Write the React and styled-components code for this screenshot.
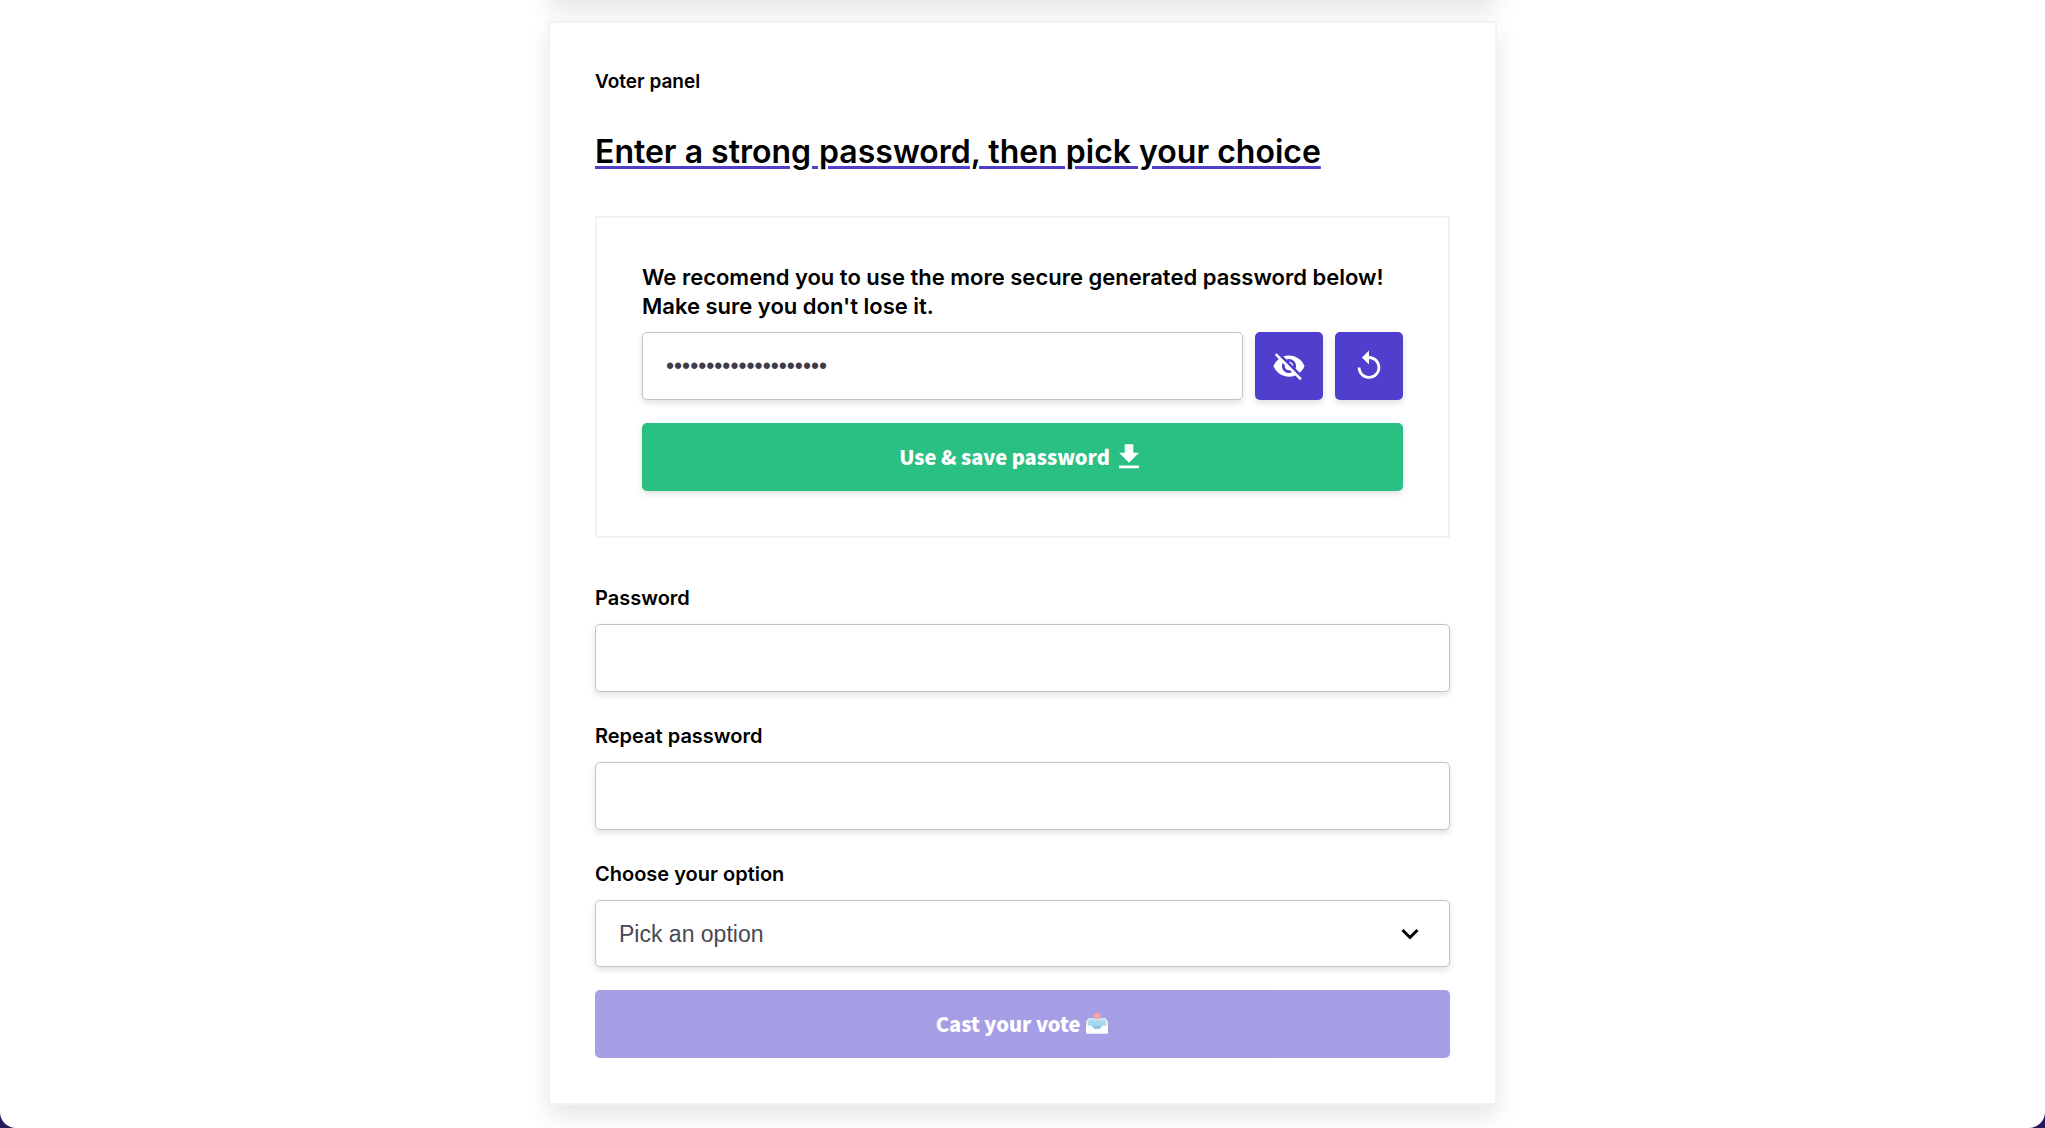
import React, { useState } from "react";
import styled, { createGlobalStyle } from "styled-components";
import { MdVisibility, MdVisibilityOff, MdReplay, MdFileDownload } from "react-icons/md";

const GlobalStyle = createGlobalStyle`
  *, *::before, *::after { box-sizing: border-box; }
  html { background: #281a5c; }
  body {
    margin: 0;
    color: #000;
    font-family: Inter, "Liberation Sans", sans-serif;
  }
`;

const Page = styled.main`
  display: flex;
  flex-direction: column;
  align-items: center;
  gap: 21px;
  min-height: 100vh;
  padding-bottom: 23px;
  overflow: hidden;
  background: #fff;
  border-radius: 0 0 16px 16px;
`;

const Card = styled.section`
  width: 100%;
  max-width: 949px;
  padding: 45px;
  border: 2px solid #f2f2f2;
  background: #fff;
  box-shadow: 0 11px 23px rgba(0, 0, 0, 0.1);
`;

const PreviousCard = styled(Card)`
  margin-top: -94px;
`;

const Eyebrow = styled.p`
  margin: 0 0 36px;
  font-size: 19px;
  font-weight: 600;
  line-height: 28px;
`;

const Title = styled.h2`
  margin: 0 0 44px;
  font-size: 32px;
  font-weight: 600;
  line-height: 40px;
  text-decoration: underline;
  text-decoration-color: #503fcd;
  text-decoration-thickness: 3px;
  text-underline-offset: 3px;
`;

const Suggestion = styled.div`
  display: flex;
  flex-direction: column;
  gap: 23px;
  margin-bottom: 48px;
  padding: 45px;
  border: 2px solid #f2f2f2;
`;

const Field = styled.div`
  display: flex;
  flex-direction: column;
  gap: ${(p) => (p.$compact ? "11px" : "14px")};
`;

const Label = styled.label`
  font-size: 20px;
  font-weight: 600;
  line-height: 24px;
`;

const Advice = styled.label`
  font-size: 22px;
  font-weight: 600;
  line-height: 29px;
`;

const Row = styled.div`
  display: flex;
  gap: 12px;
`;

const Input = styled.input`
  flex: 1 0 auto;
  width: 100%;
  min-width: 0;
  height: 68px;
  padding: 0 23px;
  border: 1px solid #c4c4c6;
  border-radius: 5px;
  outline: none;
  background: #fff;
  box-shadow: 0 3px 6px rgba(0, 0, 0, 0.12);
  color: #3f3d4a;
  font-family: "Liberation Sans", Arial, sans-serif;
  font-size: 23px;
  ${Row} & { flex: 1; }
`;

const SelectWrap = styled.div`
  position: relative;
`;

const Select = styled.select`
  display: block;
  width: 100%;
  height: 67px;
  padding: 0 60px 0 23px;
  border: 1px solid #c4c4c6;
  border-radius: 5px;
  outline: none;
  appearance: none;
  background: #fff;
  box-shadow: 0 3px 6px rgba(0, 0, 0, 0.12);
  color: #4a4852;
  font-family: "Liberation Sans", Arial, sans-serif;
  font-size: 23px;
`;

const Chevron = styled.svg`
  position: absolute;
  top: 50%;
  right: 30px;
  width: 20px;
  height: 12px;
  margin-top: -6px;
  pointer-events: none;
`;

const Button = styled.button`
  display: flex;
  align-items: center;
  justify-content: center;
  gap: ${(p) => p.$gap || "0"};
  width: 100%;
  height: 68px;
  padding: 0;
  border: 0;
  border-radius: 5px;
  background: ${(p) => (p.$tone === "success" ? "#2bc083" : "#503fcd")};
  box-shadow: 0 3px 6px rgba(0, 0, 0, 0.12);
  color: #fff;
  font-family: "Noto Sans CJK SC", "Open Sans", sans-serif;
  font-size: 20px;
  font-weight: 900;
  line-height: 28px;
  cursor: pointer;

  &:disabled {
    opacity: 0.5;
    box-shadow: none;
    cursor: default;
  }
`;

const IconButton = styled(Button)`
  flex: none;
  width: 68px;
`;

const Form = styled.form`
  display: flex;
  flex-direction: column;
  gap: 32px;
`;

const Actions = styled.div`
  display: flex;
  flex-direction: column;
  gap: 23px;
`;

function OutboxIcon() {
  return (
    <svg width="24" height="24" viewBox="0 0 24 24" aria-hidden="true">
      <path d="M3.5 6h17l2.5 4v10.5a1 1 0 0 1-1 1H2a1 1 0 0 1-1-1V10z" fill="#d9e1e8" />
      <path d="M4 6h16l1.4 8H2.6z" fill="#4fb0e2" />
      <path d="M4 6h16l.4 2.2H3.6z" fill="#8fcdec" />
      <path d="M1 13.5h5.5l3 3.6h5l3-3.6H23v7a1 1 0 0 1-1 1H2a1 1 0 0 1-1-1z" fill="#fafcfd" />
      <path d="M6.5 13.5h11l-3 3.6h-5z" fill="#2c8dc4" />
      <path d="M12 0l4 3.8-1.6 1.6V7H9.6V5.4L8 3.8z" fill="#f2503f" />
    </svg>
  );
}

export default function App() {
  const [hidden, setHidden] = useState(true);
  const [generated, setGenerated] = useState("k7PqZ2vRw9TxLm4BnC8s");
  const [password, setPassword] = useState("");
  const [repeated, setRepeated] = useState("");

  const regenerate = () => {
    const chars = "ABCDEFGHJKLMNPQRSTUVWXYZabcdefghijkmnpqrstuvwxyz23456789";
    const values = crypto.getRandomValues(new Uint32Array(20));
    setGenerated(Array.from(values, (v) => chars[v % chars.length]).join(""));
  };

  const applyGenerated = () => {
    setPassword(generated);
    setRepeated(generated);
  };

  return (
    <>
      <GlobalStyle />
      <Page>
        <PreviousCard aria-hidden="true" />
        <Card>
          <Eyebrow>Voter panel</Eyebrow>
          <Title>Enter a strong password, then pick your choice</Title>
          <Suggestion>
            <Field $compact>
              <Advice htmlFor="generated">
                We recomend you to use the more secure generated password below! Make sure you don't lose it.
              </Advice>
              <Row>
                <Input id="generated" type={hidden ? "password" : "text"} value={generated} readOnly />
                <IconButton type="button" aria-label="Toggle password visibility" onClick={() => setHidden(!hidden)}>
                  {hidden ? <MdVisibilityOff size={34} /> : <MdVisibility size={34} />}
                </IconButton>
                <IconButton type="button" aria-label="Generate another password" onClick={regenerate}>
                  <MdReplay size={34} />
                </IconButton>
              </Row>
            </Field>
            <Button type="button" $tone="success" $gap="2px" onClick={applyGenerated}>
              Use &amp; save password
              <MdFileDownload size={34} />
            </Button>
          </Suggestion>
          <Form onSubmit={(e) => e.preventDefault()}>
            <Field>
              <Label htmlFor="password">Password</Label>
              <Input id="password" type="password" value={password} onChange={(e) => setPassword(e.target.value)} />
            </Field>
            <Field>
              <Label htmlFor="repeat">Repeat password</Label>
              <Input id="repeat" type="password" value={repeated} onChange={(e) => setRepeated(e.target.value)} />
            </Field>
            <Actions>
              <Field>
                <Label htmlFor="option">Choose your option</Label>
                <SelectWrap>
                  <Select id="option" defaultValue="">
                    <option value="">Pick an option</option>
                  </Select>
                  <Chevron viewBox="0 0 20 12" aria-hidden="true">
                    <path d="M2.5 2l7.5 7.5L17.5 2" fill="none" stroke="#000" strokeWidth="3" />
                  </Chevron>
                </SelectWrap>
              </Field>
              <Button type="submit" $gap="5px" disabled>
                Cast your vote
                <OutboxIcon />
              </Button>
            </Actions>
          </Form>
        </Card>
      </Page>
    </>
  );
}
